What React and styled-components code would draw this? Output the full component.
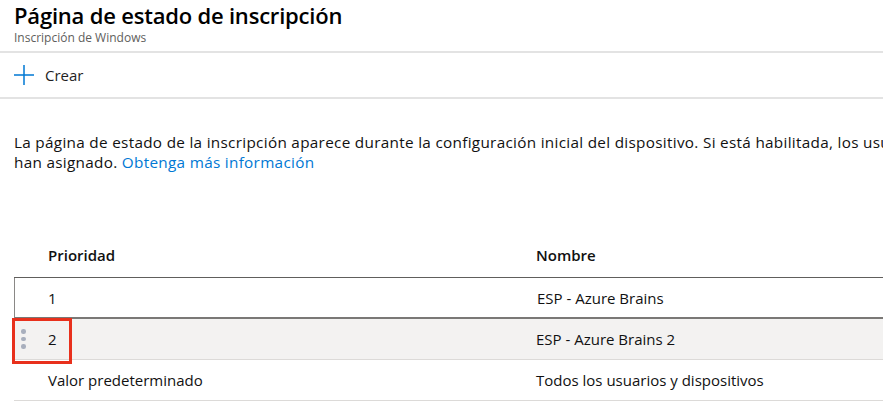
import React from "react";
import styled, { createGlobalStyle } from "styled-components";

const GlobalStyle = createGlobalStyle`
  * { box-sizing: border-box; }
  html, body {
    margin: 0;
    padding: 0;
    background: #fff;
    overflow: hidden;
  }
  body {
    font-family: "Open Sans", "Noto Sans", sans-serif;
    color: #000;
  }
`;

const Page = styled.div`
  width: 883px;
  height: 410px;
  overflow: hidden;
  position: relative;
`;

const Header = styled.header`
  padding: 2px 14px 0;
  border-bottom: 2px solid #e3e3e3;
  height: 53px;
`;

const Title = styled.h1`
  margin: 0;
  font-size: 22px;
  line-height: 26px;
  font-weight: 600;
  letter-spacing: -0.2px;
  white-space: nowrap;
`;

const Subtitle = styled.div`
  font-size: 12px;
  line-height: 16px;
  color: #605e5c;
  margin-top: 2px;
`;

const Toolbar = styled.div`
  display: flex;
  align-items: center;
  height: 46px;
  padding: 0 14px;
  border-bottom: 2px solid #e3e3e3;
`;

const CommandButton = styled.button`
  display: flex;
  align-items: center;
  gap: 11px;
  border: none;
  background: none;
  padding: 0;
  font-family: inherit;
  font-size: 15px;
  color: #1f1f1f;
  cursor: pointer;
`;

const Description = styled.p`
  margin: 33px 0 0;
  padding: 0 14px;
  width: 883px;
  overflow: hidden;
  white-space: nowrap;
  font-size: 15.3px;
  letter-spacing: 0.3px;
  line-height: 20px;
  color: #111;
`;

const Link = styled.a`
  color: #0078d4;
  text-decoration: none;
`;

const Table = styled.div`
  margin: 66px 0 0 14px;
  width: 1000px;
`;

const Row = styled.div`
  display: grid;
  grid-template-columns: 488px 1fr;
  align-items: center;
  height: ${(p) => (p.$head ? "40px" : "41px")};
  padding-bottom: ${(p) => (p.$head ? "6px" : "0")};
  position: relative;
  background: ${(p) => (p.$shaded ? "#f3f2f1" : "#fff")};
  border-bottom: 1px solid ${(p) => (p.$head ? "#605e5c" : "#dcdad8")};
  ${(p) =>
    p.$focused &&
    `
    border-left: 1px solid #8a8886;
    border-bottom: 2px solid #7a7876;
  `}
`;

const Cell = styled.div`
  padding-left: ${(p) => (p.$focused ? "33px" : "34px")};
  font-size: 15px;
  font-weight: ${(p) => (p.$head ? 600 : 400)};
  color: #111;
  white-space: nowrap;
`;

const Handle = styled.div`
  position: absolute;
  left: 7px;
  top: 10px;
  display: flex;
  flex-direction: column;
  gap: 3px;
`;

const Dot = styled.span`
  width: 4.5px;
  height: 4.5px;
  border-radius: 50%;
  background: #a8afbd;
`;

const Highlight = styled.div`
  position: absolute;
  z-index: 2;
  left: -2px;
  top: -1px;
  width: 60px;
  height: 46px;
  border: 3px solid #e8301c;
  pointer-events: none;
`;

const PlusIcon = () => (
  <svg width="20" height="20" viewBox="0 0 20 20">
    <path d="M10 0v20M0 10h20" stroke="#0078d4" strokeWidth="1.5" fill="none" />
  </svg>
);

const rows = [
  { priority: "1", name: "ESP - Azure Brains", focused: true },
  { priority: "2", name: "ESP - Azure Brains 2", shaded: true, marked: true },
  { priority: "Valor predeterminado", name: "Todos los usuarios y dispositivos" },
];

export default function App() {
  return (
    <Page>
      <GlobalStyle />
      <Header>
        <Title>Página de estado de inscripción</Title>
        <Subtitle>Inscripción de Windows</Subtitle>
      </Header>
      <Toolbar>
        <CommandButton>
          <PlusIcon />
          Crear
        </CommandButton>
      </Toolbar>
      <Description>
        La página de estado de la inscripción aparece durante la configuración inicial del dispositivo. Si está habilitada, los usuarios
        <br />
        han asignado. <Link href="#">Obtenga más información</Link>
      </Description>
      <Table>
        <Row $head>
          <Cell $head>Prioridad</Cell>
          <Cell $head>Nombre</Cell>
        </Row>
        {rows.map((r) => (
          <Row key={r.priority} $shaded={r.shaded} $focused={r.focused}>
            {r.marked && (
              <Handle>
                <Dot />
                <Dot />
                <Dot />
              </Handle>
            )}
            <Cell $focused={r.focused}>{r.priority}</Cell>
            <Cell>{r.name}</Cell>
            {r.marked && <Highlight />}
          </Row>
        ))}
      </Table>
    </Page>
  );
}
